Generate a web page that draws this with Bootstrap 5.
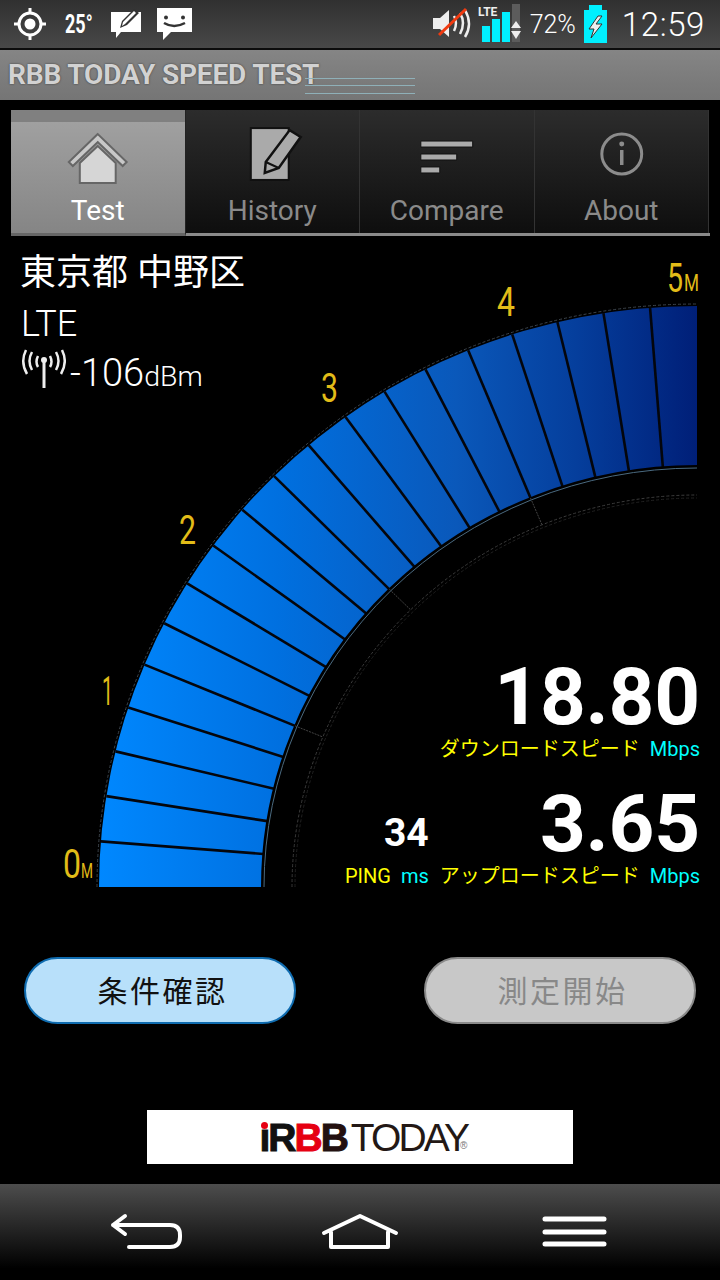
<!DOCTYPE html>
<html lang="ja">
<head>
  <meta charset="UTF-8" />
  <meta name="viewport" content="width=device-width, initial-scale=1" />
  <title>RBB TODAY SPEED TEST</title>
  <link href="https://cdn.jsdelivr.net/npm/bootstrap@5.3.0/dist/css/bootstrap.min.css" rel="stylesheet" />
  <style>
    html, body { height: 100%; }
    body {
      width: 720px;
      height: 1280px;
      overflow: hidden;
      background: #000;
      color: #fff;
      font-family: Roboto, "Noto Sans CJK JP", sans-serif;
    }
    .status-bar {
      height: 50px;
      padding: 0 15px 0 14px;
      background: linear-gradient(#303030, #484848);
      border-bottom: 2px solid #0c0c0c;
    }
    .status-temp { font-size: 25px; font-weight: 700; line-height: 1; width: 28px; margin-left: 19px; margin-right: 18px; transform: scaleX(.72); transform-origin: left; white-space: nowrap; }
    .status-pct { font-size: 25px; line-height: 1; margin-left: 9px; font-weight: 300; }
    .status-time { font-size: 33px; line-height: 1; margin-left: 14px; font-weight: 300; letter-spacing: .6px; }
    .title-bar {
      height: 50px;
      padding-left: 8px;
      background: linear-gradient(#858585, #757575);
      font-size: 28px;
      font-weight: 700;
      color: #d2d2d2;
      text-shadow: 0 0 2px #333;
      letter-spacing: -.15px;
    }
    .title-lines { width: 110px; height: 16px; left: 305px; top: 28px; border-top: 1px solid #8fb0b8; border-bottom: 1px solid #8fb0b8; }
    .title-lines::after { content: ""; display: block; margin-top: 6px; border-top: 1px solid #8fb0b8; }
    .tab-strip { margin: 10px 10px 0 11px; height: 126px; border-bottom: 3px solid #8a8a8a; }
    .tab-item {
      width: 174.5px;
      padding-top: 12px;
      background: linear-gradient(#2c2c2c, #0e0e0e);
      border-right: 1px solid #333;
      color: #8a8a8a;
      font-size: 28px;
      line-height: 1;
    }
    .tab-item.tab-on {
      background: linear-gradient(#808080 12px, #a0a0a0 12px, #858585);
      color: #fff;
      margin-bottom: -3px;
      border-bottom: 3px solid #666;
      border-right: 1px solid #222;
    }
    .tab-item svg { display: block; height: 74px; width: 100%; }
    .tab-item span { display: block; margin-top: 1px; }
    .gauge-area { height: 660px; padding: 17px 21px 0 20px; }
    .gauge-svg { left: 0; top: 0; }
    .place { font-size: 36px; line-height: 40px; font-weight: 400; }
    .net { font-size: 36px; line-height: 38px; margin-top: 12px; margin-left: 1px; font-weight: 300; }
    .dbm { font-size: 38px; line-height: 38px; margin-top: 11px; font-weight: 300; }
    .dbm small { font-size: 28.500px; }
    .dbm-icon { margin: -12px 4px 0 1px; }
    .readout { margin: auto -1px 8px 0; }
    .big-num { font-size: 80px; font-weight: 700; line-height: 1; letter-spacing: -.2px; }
    .ping-num { font-size: 39px; font-weight: 700; line-height: 1; margin-bottom: 11px; }
    .lbl-row { font-size: 20px; line-height: 24px; color: #ff0; white-space: nowrap; }
    .lbl-cyan { color: #0ff; margin-left: 10px; }
    .upload-row { margin-top: 23px; }
    .ping-col { margin-right: 11px; }
    .btn-row { padding: 61px 24px 0; }
    .btn-pill {
      width: 272px;
      height: 67px;
      border-radius: 34px;
      font-size: 30px;
      line-height: 1;
      letter-spacing: 2.500px;
      padding: 0 0 4px 5px;
      font-family: "Noto Sans CJK JP", sans-serif;
    }
    .btn-pill.pill-blue { background: #b8e0fa; border: 2px solid #0f6cb0; color: #111; }
    .btn-pill.pill-grey, .btn-pill.pill-grey:disabled { background: #c8c8c8; border: 2px solid #8a8a8a; color: #888; opacity: 1; }
    .ad-box { width: 426px; height: 54px; margin: 86px auto 0; padding-left: 7px; background: #fff; font-family: "Liberation Sans", sans-serif; line-height: 1; }
    .logo-bold { font-size: 39px; font-weight: 700; letter-spacing: -2px; -webkit-text-stroke: 1px currentColor; }
    .logo-thin { font-size: 39px; color: #231815; letter-spacing: -2.900px; margin-left: 4px; }
    .logo-reg { font-size: 10px; color: #777; margin-left: -7px; align-self: flex-end; margin-bottom: 13px; }
    .logo-red { color: #e60012; }
    .logo-dark { color: #23100f; }
    .logo-black { color: #111; }
    .logo-dot { width: 7px; height: 7px; border-radius: 50%; background: #e60012; left: 1px; top: 4px; }
    .nav-keys { height: 96px; margin-top: 20px; background: linear-gradient(#4d4d4d, #000 88%); }
  </style>
</head>
<body class="d-flex flex-column">

  <div class="status-bar d-flex align-items-center">
    <svg width="32" height="36" viewBox="14 7 32 36" class="flex-shrink-0">
      <circle cx="30" cy="25" r="11" fill="none" stroke="#fff" stroke-width="3"/>
      <circle cx="30" cy="25" r="5.500" fill="#fff"/>
      <path d="M30 9v5M30 36v5M14 25h5M41 25h5" stroke="#fff" stroke-width="3"/>
    </svg>
    <span class="status-temp">25°</span>
    <svg width="30" height="30" viewBox="111 11 30 30" class="flex-shrink-0">
      <path d="M111 14h30v20h-20l-5 6v-6h-5z" fill="#fff"/>
      <path d="M120 30l2-7 12-12 5 4-12 12z" fill="#333"/>
      <path d="M122 28l1-4 11-11 2 2-11 11z" fill="#fff"/>
    </svg>
    <svg width="35" height="33" viewBox="156 9 35 33" class="flex-shrink-0 ms-3">
      <path d="M156 9h35v24h-21l-8 8v-8h-6z" fill="#fff"/>
      <circle cx="165" cy="18.500" r="2" fill="#333"/>
      <circle cx="182" cy="18.500" r="2" fill="#333"/>
      <path d="M163 24q10 6 21 0" fill="none" stroke="#333" stroke-width="2.500"/>
    </svg>
    <svg width="88" height="42" viewBox="434 4 88 42" class="flex-shrink-0 ms-auto">
      <path d="M434 19h7l9-8v27l-9-8h-7z" fill="#eee"/>
      <path d="M455 17q4 7 0 15M461 14q6 10 0 21M466 11q8 14 0 27" fill="none" stroke="#eee" stroke-width="2.500"/>
      <path d="M440 36l27-26" stroke="#f03a10" stroke-width="3"/>
      <text x="479" y="17" font-family="Roboto" font-size="12" font-weight="700" fill="#eee">LTE</text>
      <rect x="483" y="27" width="8" height="16" fill="#00f0ff"/>
      <rect x="493" y="20" width="8" height="23" fill="#00f0ff"/>
      <rect x="503" y="13" width="8" height="30" fill="#00f0ff"/>
      <rect x="513" y="5" width="8" height="38" fill="#5c5c5c"/>
      <path d="M517 22l5 7h-10zM517 40l5-8h-10z" fill="#eee"/>
    </svg>
    <span class="status-pct">72%</span>
    <svg width="24" height="39" viewBox="585 5 24 39" class="flex-shrink-0 ms-2">
      <path d="M590 5h13v5h5v33h-23v-33h5z" fill="#00f0ff"/>
      <path d="M599 16l-9 13h5l-3 9 11-14h-6l6-8z" fill="#eee" stroke="#333"/>
    </svg>
    <span class="status-time">12:59</span>
  </div>

  <div class="title-bar d-flex align-items-center position-relative">
    RBB TODAY SPEED TEST
    <div class="title-lines position-absolute"></div>
  </div>

  <nav class="tab-strip nav flex-nowrap">
    <a class="tab-item tab-on text-center text-decoration-none" href="#">
      <svg viewBox="0 0 174 74">
        <path d="M87 12l-29 28 4 4 25-24 25 24 4-4z" fill="#c8c8c8" stroke="#666" stroke-width="2"/>
        <path d="M87 24l-18 17v20h36v-20z" fill="#d6d6d6" stroke="#666" stroke-width="2"/>
      </svg>
      <span>Test</span>
    </a>
    <a class="tab-item text-center text-decoration-none" href="#">
      <svg viewBox="0 0 174 74">
        <rect x="65" y="6" width="38" height="52" fill="#aaa" stroke="#111" stroke-width="2"/>
        <path d="M79 51l1-11 24-32 11 7-22 31z" fill="#aaa" stroke="#111" stroke-width="2.500"/>
        <path d="M80 40l13 6" stroke="#111" stroke-width="2"/>
      </svg>
      <span>History</span>
    </a>
    <a class="tab-item text-center text-decoration-none" href="#">
      <svg viewBox="0 0 174 74">
        <path d="M61 19h52v6h-52zM61 32h36v6h-36zM61 45h19v6h-19z" fill="#aaa" stroke="#111" stroke-width="1"/>
      </svg>
      <span>Compare</span>
    </a>
    <a class="tab-item text-center text-decoration-none" href="#">
      <svg viewBox="0 0 174 74">
        <circle cx="87" cy="32" r="20" fill="none" stroke="#8c8c8c" stroke-width="3"/>
        <circle cx="87" cy="22" r="2.500" fill="#8c8c8c"/>
        <path d="M87 28v15" stroke="#8c8c8c" stroke-width="3.500"/>
      </svg>
      <span>About</span>
    </a>
  </nav>

  <div class="gauge-area position-relative d-flex flex-column">
    <svg id="gauge" class="gauge-svg position-absolute" width="720" height="660" viewBox="0 236 720 660">
      <defs>
        <linearGradient id="bluefade" gradientUnits="userSpaceOnUse" x1="98" y1="0" x2="697" y2="0">
          <stop offset="0" stop-color="#0088ff"/>
          <stop offset=".3" stop-color="#0070e0"/>
          <stop offset=".6" stop-color="#0a58ba"/>
          <stop offset=".8" stop-color="#053e9c"/>
          <stop offset="1" stop-color="#001f78"/>
        </linearGradient>
      </defs>
      <g font-family="Roboto" font-weight="400" fill="#e2bc18">
        <text x="63" y="878" font-size="40" textLength="18" lengthAdjust="spacingAndGlyphs">0</text>
        <text x="81" y="878" font-size="20" textLength="12" lengthAdjust="spacingAndGlyphs">M</text>
        <text x="102" y="705" font-size="40" textLength="11" lengthAdjust="spacingAndGlyphs">1</text>
        <text x="179" y="544" font-size="40" textLength="17" lengthAdjust="spacingAndGlyphs">2</text>
        <text x="321" y="402" font-size="40" textLength="17" lengthAdjust="spacingAndGlyphs">3</text>
        <text x="497" y="316" font-size="40" textLength="18" lengthAdjust="spacingAndGlyphs">4</text>
        <text x="667" y="292" font-size="40" textLength="16" lengthAdjust="spacingAndGlyphs">5</text>
        <text x="684" y="291" font-size="23" textLength="15" lengthAdjust="spacingAndGlyphs">M</text>
      </g>
    </svg>

    <div class="position-relative">
      <div class="place">東京都 中野区</div>
      <div class="net">LTE</div>
      <div class="dbm d-flex align-items-center">
        <svg width="45" height="42" viewBox="21 348 45 42" class="dbm-icon flex-shrink-0">
          <path d="M44 360v28" stroke="#eee" stroke-width="3"/>
          <circle cx="44" cy="360" r="3" fill="#eee"/>
          <path d="M38 356q-3 6 0 11M50 356q3 6 0 11M32 352q-5 9 0 18M56 352q5 9 0 18M26 350q-6 12 1 24M62 350q6 12-1 24" fill="none" stroke="#eee" stroke-width="2.500"/>
        </svg>
        <span>-106<small>dBm</small></span>
      </div>
    </div>

    <div class="readout position-relative ms-auto d-flex flex-column align-items-end">
      <div class="big-num">18.80</div>
      <div class="lbl-row">ダウンロードスピード<span class="lbl-cyan">Mbps</span></div>
      <div class="upload-row d-flex align-items-end">
        <div class="ping-col d-flex flex-column align-items-end">
          <div class="ping-num">34</div>
          <div class="lbl-row">PING<span class="lbl-cyan">ms</span></div>
        </div>
        <div class="d-flex flex-column align-items-end">
          <div class="big-num">3.65</div>
          <div class="lbl-row">アップロードスピード<span class="lbl-cyan">Mbps</span></div>
        </div>
      </div>
    </div>
  </div>

  <div class="btn-row d-flex justify-content-between">
    <button class="btn btn-pill pill-blue" type="button">条件確認</button>
    <button class="btn btn-pill pill-grey" type="button" disabled>測定開始</button>
  </div>

  <div class="ad-box d-flex align-items-center justify-content-center">
    <span class="logo-bold logo-black position-relative">ı<span class="logo-dot position-absolute"></span>R</span><span class="logo-bold logo-red">B</span><span class="logo-bold logo-dark">B</span><span class="logo-thin">TODAY</span><span class="logo-reg">®</span>
  </div>

  <div class="nav-keys d-flex justify-content-center">
    <svg width="720" height="96" viewBox="0 1184 720 96">
      <g fill="none" stroke="#fff" stroke-width="4" stroke-linecap="round" stroke-linejoin="round">
        <path d="M125 1216l-12 9 12 9M113 1225h57q10 0 10 10v2q0 10-10 10h-41"/>
        <path d="M324 1233l36-17 36 17M331 1232v15h57v-15"/>
      </g>
      <path d="M545 1219h59M545 1232h59M545 1244h59" stroke="#fff" stroke-width="5" stroke-linecap="round"/>
    </svg>
  </div>

  <script>
    // gauge geometry in page coordinates, slightly flattened arcs like the app draws
    const cx = 697, cy = 887;
    const outer = [598, 581], inner = [435, 421], ring2 = [405, 392];
    const ns = 'http://www.w3.org/2000/svg';
    const svg = document.getElementById('gauge');

    function add(tag, attrs) {
      const el = document.createElementNS(ns, tag);
      for (const k in attrs) el.setAttribute(k, attrs[k]);
      svg.appendChild(el);
    }
    function pt(r, deg) {
      const a = deg * Math.PI / 180;
      return [cx - r[0] * Math.cos(a), cy - r[1] * Math.sin(a)];
    }
    function arc(r, dash, stroke, width, out) {
      add('path', {
        d: `M${cx - r[0] - out} ${cy} A${r[0] + out} ${r[1] + out} 0 0 1 ${cx} ${cy - r[1] - out}`,
        fill: 'none', stroke: stroke, 'stroke-width': width, 'stroke-dasharray': dash
      });
    }

    add('path', {
      d: `M${cx - outer[0]} ${cy} A${outer[0]} ${outer[1]} 0 0 1 ${cx} ${cy - outer[1]} V${cy - inner[1]} A${inner[0]} ${inner[1]} 0 0 0 ${cx - inner[0]} ${cy} Z`,
      fill: 'url(#bluefade)'
    });

    for (let i = 1; i < 20; i++) {
      const a = pt(outer, i * 4.5), b = pt(inner, i * 4.5);
      add('line', { x1: a[0], y1: a[1], x2: b[0], y2: b[1], stroke: '#04060c', 'stroke-width': 2.6 });
    }

    arc(outer, '3 2', '#3c444c', 1, 2);
    arc(inner, 'none', '#000', 2, 0);
    arc(inner, 'none', '#4a6a80', 1, -2);
    arc(ring2, '3 2', '#3c3c3c', 1, 0);
    arc(ring2, '3 2', '#222', 1, -3);

    [22.5, 45, 67.5].forEach(d => {
      const a = pt(inner, d), b = pt(ring2, d);
      add('line', { x1: a[0], y1: a[1], x2: b[0], y2: b[1], stroke: '#444', 'stroke-width': 1, 'stroke-dasharray': '2 1' });
    });
  </script>
  <script src="https://cdn.jsdelivr.net/npm/bootstrap@5.3.0/dist/js/bootstrap.bundle.min.js"></script>
</body>
</html>
